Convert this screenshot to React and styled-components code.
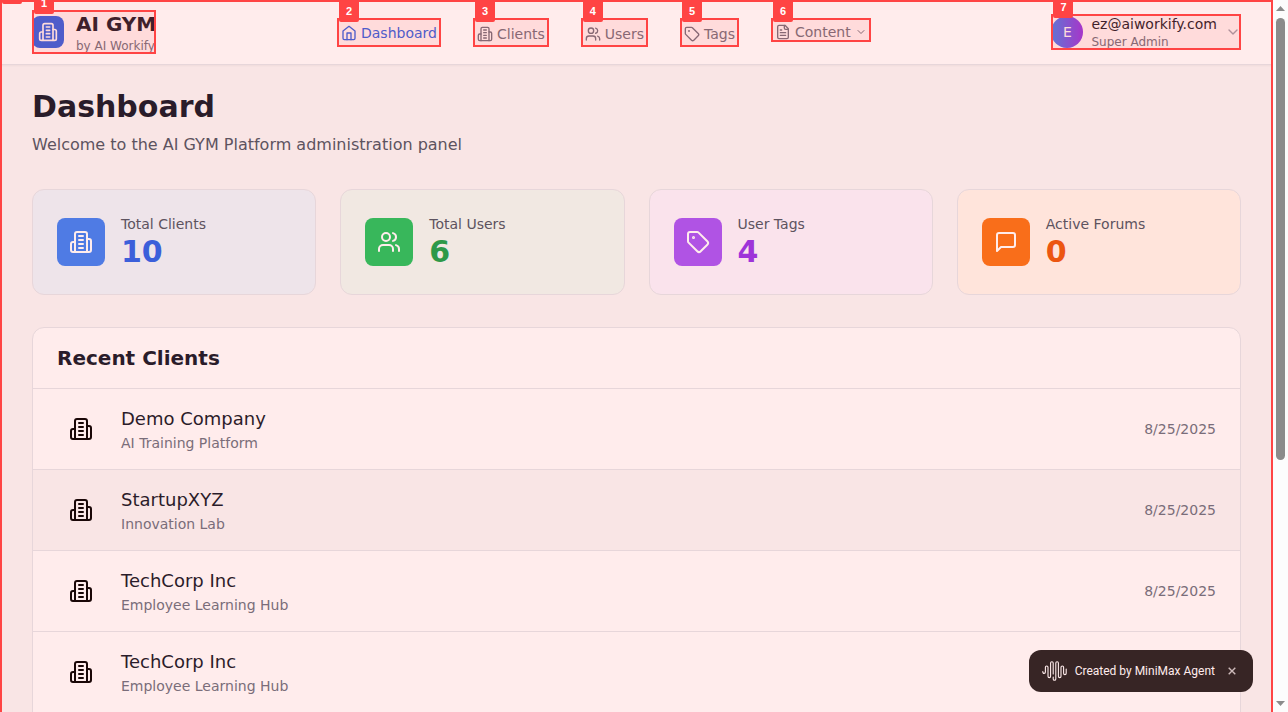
import React from 'react';
import styled, { createGlobalStyle, css } from 'styled-components';

const GlobalStyle = createGlobalStyle`
  * { box-sizing: border-box; }
  body {
    margin: 0;
    font-family: "DejaVu Sans", sans-serif;
    color: #111827;
    overflow: hidden;
  }
  h1, h2, p, ul { margin: 0; padding: 0; }
  button { font: inherit; border: 0; background: none; cursor: pointer; }
  a { color: inherit; text-decoration: none; }
`;

const Shell = styled.div`
  display: grid;
  grid-template-columns: minmax(0, 1fr) 15px;
  height: 100vh;
`;

const Page = styled.div`
  position: relative;
  overflow: hidden;
  background: #f9f8f8;
  color: #111827;
`;

const PageFrame = styled.div`
  position: absolute;
  inset: 0;
  z-index: 5;
  border: 2px solid #ff4444;
  border-bottom: 0;
  background: rgba(255, 68, 68, 0.1);
  background-clip: padding-box;
  pointer-events: none;
`;

const MarkBox = styled.span`
  position: absolute;
  inset: 0;
  z-index: 10;
  border: 2px solid #ff4444;
  background: rgba(255, 68, 68, 0.1);
  background-clip: padding-box;
  pointer-events: none;
`;

const MarkLabel = styled.span`
  position: absolute;
  top: -20px;
  left: 0;
  width: 20px;
  height: 22px;
  border-radius: 2px;
  background: #ff4444;
  color: #fff;
  font: bold 11px/22px "Liberation Sans", sans-serif;
  text-align: center;
`;

const Header = styled.header`
  display: flex;
  align-items: center;
  justify-content: space-between;
  height: 65px;
  padding: 0 32px;
  background: #fff;
  border-bottom: 1px solid #e5e7eb;
  box-shadow: 0 1px 2px rgba(0, 0, 0, 0.05);
`;

const Brand = styled.a`
  position: relative;
  display: flex;
  align-items: center;
  gap: 12px;
`;

const BrandIcon = styled.span`
  display: grid;
  place-items: center;
  width: 32px;
  height: 32px;
  border-radius: 8px;
  background: #2563eb;
  color: #fff;
`;

const BrandName = styled.span`
  display: block;
  font-size: 20px;
  line-height: 28px;
  font-weight: 700;
`;

const SmallText = styled.span`
  display: block;
  font-size: 12px;
  line-height: 16px;
  color: #6b7280;
`;

const Nav = styled.nav`
  display: flex;
  align-items: flex-start;
  gap: 32px;
  height: 28px;
`;

const navItem = css`
  position: relative;
  display: flex;
  align-items: center;
  gap: 4px;
  font-size: 14px;
  line-height: 20px;
`;

const NavLink = styled.a`
  ${navItem}
  padding: ${(p) => (p.$active ? '5px 4px 4px' : '6px 4px 3px')};
  color: ${(p) => (p.$active ? '#2563eb' : '#6b7280')};
`;

const NavButton = styled.button`
  && {
    ${navItem}
    padding: 4px 4px 0;
    color: #6b7280;
  }
`;

const Account = styled.button`
  position: relative;
  display: flex;
  align-items: center;
  gap: 8px;
  padding: 0;
  text-align: left;
  color: #9ca3af;
`;

const Avatar = styled.span`
  display: grid;
  place-items: center;
  width: 32px;
  height: 32px;
  border-radius: 50%;
  background: linear-gradient(90deg, #3b82f6, #9333ea);
  color: #fff;
  font-size: 14px;
`;

const Email = styled.span`
  display: block;
  font-size: 14px;
  line-height: 20px;
  color: #111827;
`;

const Main = styled.main`
  padding: 24px 32px;
`;

const Title = styled.h1`
  font-size: 30px;
  line-height: 36px;
  font-weight: 700;
`;

const Lead = styled.p`
  && {
    margin: 8px 0 32px;
  }
  font-size: 16px;
  line-height: 24px;
  color: #4b5563;
`;

const Stats = styled.section`
  display: grid;
  grid-template-columns: repeat(4, minmax(0, 1fr));
  gap: 24px;
  margin-bottom: 32px;
`;

const StatCard = styled.article`
  display: flex;
  align-items: center;
  gap: 16px;
  padding: 24px;
  border: 1px solid #e5e7eb;
  border-radius: 12px;
  background: ${(p) => p.$background};
`;

const StatIcon = styled.span`
  display: grid;
  place-items: center;
  width: 48px;
  height: 48px;
  border-radius: 8px;
  background: ${(p) => p.$color};
  color: #fff;
`;

const StatLabel = styled.p`
  font-size: 14px;
  line-height: 20px;
  color: #4b5563;
`;

const StatValue = styled.p`
  font-size: 30px;
  line-height: 36px;
  font-weight: 700;
  color: ${(p) => p.$color};
`;

const Panel = styled.section`
  border: 1px solid #e5e7eb;
  border-radius: 12px;
  background: #fff;
  overflow: hidden;
`;

const PanelTitle = styled.h2`
  && {
    padding: 16px 24px;
  }
  font-size: 20px;
  line-height: 28px;
  font-weight: 700;
`;

const ClientList = styled.ul`
  list-style: none;
`;

const ClientRow = styled.li`
  display: flex;
  align-items: center;
  gap: 16px;
  padding: 16px 24px;
  border-top: 1px solid #e5e7eb;
  background: ${(p) => (p.$highlighted ? '#f9f8f8' : '#fff')};
`;

const ClientIcon = styled.span`
  display: grid;
  place-items: center;
  width: 48px;
  height: 48px;
  color: #000;
`;

const ClientInfo = styled.div`
  flex: 1;
`;

const ClientName = styled.p`
  font-size: 18px;
  line-height: 28px;
`;

const Muted = styled.p`
  font-size: 14px;
  line-height: 20px;
  color: #6b7280;
`;

const Toast = styled.aside`
  position: absolute;
  right: 20px;
  bottom: 20px;
  display: flex;
  align-items: center;
  gap: 8px;
  height: 42px;
  padding: 0 12px 0 13px;
  border-radius: 12px;
  background: #212222;
  color: #fff;
  font: 12px/16px Roboto, sans-serif;
`;

const ToastClose = styled.button`
  display: grid;
  place-items: center;
  width: 18px;
  height: 18px;
  padding: 0;
  color: #c8c8c8;
`;

const ScrollTrack = styled.div`
  display: flex;
  flex-direction: column;
  align-items: center;
  padding: 5px 0;
  gap: 7px;
  background: #fcfcfc;
  color: #8b8b8b;
`;

const ScrollThumb = styled.div`
  flex: 0 0 63%;
  width: 9px;
  border-radius: 5px;
  background: #8b8b8b;
`;

const ScrollSpace = styled.div`
  flex: 1;
`;

const shapes = {
  building: (
    <>
      <path d="M6 22V4a2 2 0 0 1 2-2h8a2 2 0 0 1 2 2v18Z" />
      <path d="M6 12H4a2 2 0 0 0-2 2v6a2 2 0 0 0 2 2h2" />
      <path d="M18 9h2a2 2 0 0 1 2 2v9a2 2 0 0 1-2 2h-2" />
      <path d="M10 6h4M10 10h4M10 14h4M10 18h4" />
    </>
  ),
  home: (
    <>
      <path d="m3 9 9-7 9 7v11a2 2 0 0 1-2 2H5a2 2 0 0 1-2-2z" />
      <path d="M9 22V12h6v10" />
    </>
  ),
  users: (
    <>
      <path d="M16 21v-2a4 4 0 0 0-4-4H6a4 4 0 0 0-4 4v2" />
      <circle cx="9" cy="7" r="4" />
      <path d="M22 21v-2a4 4 0 0 0-3-3.87M16 3.13a4 4 0 0 1 0 7.75" />
    </>
  ),
  tag: (
    <>
      <path d="M12.586 2.586A2 2 0 0 0 11.172 2H4a2 2 0 0 0-2 2v7.172a2 2 0 0 0 .586 1.414l8.704 8.704a2.426 2.426 0 0 0 3.42 0l6.58-6.58a2.426 2.426 0 0 0 0-3.42z" />
      <circle cx="7.5" cy="7.5" r=".5" fill="currentColor" />
    </>
  ),
  file: (
    <>
      <path d="M15 2H6a2 2 0 0 0-2 2v16a2 2 0 0 0 2 2h12a2 2 0 0 0 2-2V7Z" />
      <path d="M14 2v4a2 2 0 0 0 2 2h4M10 9H8M16 13H8M16 17H8" />
    </>
  ),
  message: <path d="M21 15a2 2 0 0 1-2 2H7l-4 4V5a2 2 0 0 1 2-2h14a2 2 0 0 1 2 2z" />,
  chevron: <path d="m6 9 6 6 6-6" />,
};

function Icon({ name, size = 16 }) {
  return (
    <svg
      width={size}
      height={size}
      viewBox="0 0 24 24"
      fill="none"
      stroke="currentColor"
      strokeWidth="2"
      strokeLinecap="round"
      strokeLinejoin="round"
      aria-hidden="true"
    >
      {shapes[name]}
    </svg>
  );
}

function Mark({ n }) {
  return (
    <MarkBox>
      <MarkLabel>{n}</MarkLabel>
    </MarkBox>
  );
}

function WaveLogo() {
  return (
    <svg width="25" height="22" viewBox="0 0 25 22" fill="none" stroke="currentColor" strokeWidth="1.1" strokeLinecap="round" aria-hidden="true">
      <path d="M.8 11.5v.6a1.3 1.3 0 0 0 2.6 0V7.3a1.3 1.3 0 0 1 2.6 0v9a1.3 1.3 0 0 0 2.6 0V3a1.3 1.3 0 0 1 2.6 0v11" />
      <path d="M11.2 17v2a1.3 1.3 0 0 0 2.6 0V3a1.3 1.3 0 0 1 2.6 0v13.300a1.3 1.3 0 0 0 2.6 0v-9a1.3 1.3 0 0 1 2.6 0v6a1.3 1.3 0 0 0 2.6 0V9" />
    </svg>
  );
}

const links = [
  { label: 'Dashboard', icon: 'home', active: true },
  { label: 'Clients', icon: 'building' },
  { label: 'Users', icon: 'users' },
  { label: 'Tags', icon: 'tag' },
];

const stats = [
  { label: 'Total Clients', value: 10, icon: 'building', color: '#3b82f6', text: '#2563eb', background: '#edf6fd' },
  { label: 'Total Users', value: 6, icon: 'users', color: '#22c55e', text: '#16a34a', background: '#f0fbf4' },
  { label: 'User Tags', value: 4, icon: 'tag', color: '#a855f7', text: '#9333ea', background: '#faf5ff' },
  { label: 'Active Forums', value: 0, icon: 'message', color: '#f97316', text: '#ea580c', background: '#fff6ed' },
];

const clients = [
  { name: 'Demo Company', detail: 'AI Training Platform', date: '8/25/2025' },
  { name: 'StartupXYZ', detail: 'Innovation Lab', date: '8/25/2025', highlighted: true },
  { name: 'TechCorp Inc', detail: 'Employee Learning Hub', date: '8/25/2025' },
  { name: 'TechCorp Inc', detail: 'Employee Learning Hub' },
];

export default function App() {
  return (
    <Shell>
      <GlobalStyle />
      <Page>
        <Header>
          <Brand href="#">
            <BrandIcon><Icon name="building" size={20} /></BrandIcon>
            <span>
              <BrandName>AI GYM</BrandName>
              <SmallText>by AI Workify</SmallText>
            </span>
            <Mark n={1} />
          </Brand>
          <Nav>
            {links.map((link, i) => (
              <NavLink key={link.label} href="#" $active={link.active}>
                <Icon name={link.icon} />
                {link.label}
                <Mark n={i + 2} />
              </NavLink>
            ))}
            <NavButton type="button">
              <Icon name="file" />
              Content
              <Icon name="chevron" size={12} />
              <Mark n={6} />
            </NavButton>
          </Nav>
          <Account type="button">
            <Avatar>E</Avatar>
            <span>
              <Email>ez@aiworkify.com</Email>
              <SmallText>Super Admin</SmallText>
            </span>
            <Icon name="chevron" />
            <Mark n={7} />
          </Account>
        </Header>
        <Main>
          <Title>Dashboard</Title>
          <Lead>Welcome to the AI GYM Platform administration panel</Lead>
          <Stats>
            {stats.map((s) => (
              <StatCard key={s.label} $background={s.background}>
                <StatIcon $color={s.color}><Icon name={s.icon} size={24} /></StatIcon>
                <div>
                  <StatLabel>{s.label}</StatLabel>
                  <StatValue $color={s.text}>{s.value}</StatValue>
                </div>
              </StatCard>
            ))}
          </Stats>
          <Panel>
            <PanelTitle>Recent Clients</PanelTitle>
            <ClientList>
              {clients.map((c, i) => (
                <ClientRow key={i} $highlighted={c.highlighted}>
                  <ClientIcon><Icon name="building" size={24} /></ClientIcon>
                  <ClientInfo>
                    <ClientName>{c.name}</ClientName>
                    <Muted>{c.detail}</Muted>
                  </ClientInfo>
                  {c.date && <Muted>{c.date}</Muted>}
                </ClientRow>
              ))}
              <ClientRow>
                <ClientIcon />
              </ClientRow>
            </ClientList>
          </Panel>
        </Main>
        <Toast>
          <WaveLogo />
          Created by MiniMax Agent
          <ToastClose type="button" aria-label="Close">
            <svg width="8" height="8" viewBox="0 0 8 8" stroke="currentColor" strokeWidth="1.4" aria-hidden="true">
              <path d="M.7.7l6.6 6.6M7.3.7.7 7.3" />
            </svg>
          </ToastClose>
        </Toast>
        <PageFrame>
          <MarkLabel />
        </PageFrame>
      </Page>
      <ScrollTrack aria-hidden="true">
        <svg width="9" height="6" viewBox="0 0 9 6" fill="currentColor"><path d="M0 6 4.5 1 9 6z" /></svg>
        <ScrollThumb />
        <ScrollSpace />
        <svg width="9" height="6" viewBox="0 0 9 6" fill="currentColor"><path d="M0 0h9L4.5 5z" /></svg>
      </ScrollTrack>
    </Shell>
  );
}
